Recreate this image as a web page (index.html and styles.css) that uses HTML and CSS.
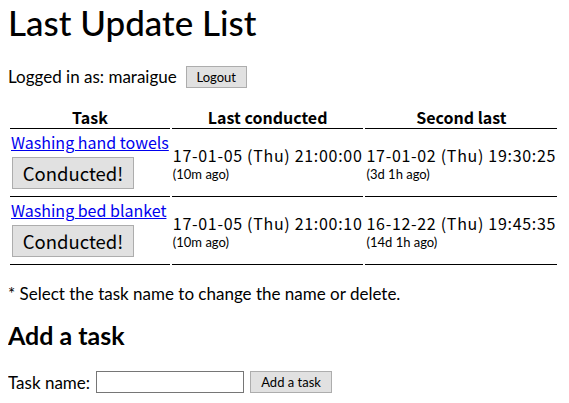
FILE: index.html
```html
<!DOCTYPE html>
<html>
<head>
<meta charset="utf-8">
<link rel="stylesheet" href="styles.css">
</head>
<body>
<h1 class="title">Last Update List</h1>
<div class="login">Logged in as: maraigue <button class="btn logout">Logout</button></div>
<table class="list">
  <thead>
    <tr><th class="c1">Task</th><th class="c2">Last conducted</th><th class="c3">Second last</th></tr>
  </thead>
  <tbody>
    <tr>
      <td class="task"><a href="#">Washing hand towels</a><button class="btn big">Conducted!</button></td>
      <td><div class="date">17-01-05 (Thu) 21:00:00</div><div class="ago">(10m ago)</div></td>
      <td><div class="date">17-01-02 (Thu) 19:30:25</div><div class="ago">(3d 1h ago)</div></td>
    </tr>
    <tr>
      <td class="task"><a href="#">Washing bed blanket</a><button class="btn big">Conducted!</button></td>
      <td><div class="date">17-01-05 (Thu) 21:00:10</div><div class="ago">(10m ago)</div></td>
      <td><div class="date">16-12-22 (Thu) 19:45:35</div><div class="ago">(14d 1h ago)</div></td>
    </tr>
  </tbody>
</table>
<p class="note">* Select the task name to change the name or delete.</p>
<h2 class="sub">Add a task</h2>
<div class="add">Task name: <input class="field" type="text"><button class="btn addbtn">Add a task</button></div>
</body>
</html>
```
FILE: styles.css
```css
body {
  margin: 8px;
  font-family: Lato, "Noto Sans", sans-serif;
  font-size: 17px;
  color: #000;
  background: #fff;
}
.title {
  font-size: 35px;
  font-weight: 500;
  margin: 0;
  line-height: 28px;
}
.login {
  margin-top: 30px;
  line-height: 22px;
  height: 22px;
  display: flex;
  align-items: center;
}
.btn {
  font-family: Lato, sans-serif;
  font-size: 13px;
  background: #e1e1e1;
  border: 1px solid #adadad;
  padding: 0 9px;
  height: 22px;
  color: #000;
  box-sizing: border-box;
}
.logout {
  width: 61px;
  margin-left: 9px;
}
.list {
  margin-top: 16px;
  border-spacing: 2px;
  font-family: "Noto Sans CJK JP", sans-serif;
  table-layout: fixed;
}
.list th {
  font-weight: bold;
  font-size: 16px;
  border-bottom: 1px solid #000;
  line-height: 20px;
  padding: 1px;
}
.c1 { width: 157px; }
.c2 { width: 189px; }
.c3 { width: 190px; }
.list td {
  border-bottom: 1px solid #000;
  padding: 1px;
  vertical-align: middle;
}
.task a {
  display: block;
  color: #0000ee;
  font-size: 16px;
  line-height: 20px;
  white-space: nowrap;
}
.btn.big {
  font-family: "Noto Sans CJK JP", sans-serif;
  font-size: 18.5px;
  height: 32px;
  width: 122px;
  padding: 0;
  margin: 5px 0 6px 1px;
  display: block;
}
.date {
  font-size: 16px;
  line-height: 19px;
  letter-spacing: 0.7px;
  white-space: nowrap;
}
.ago {
  font-family: Lato, sans-serif;
  font-size: 13px;
  line-height: 15px;
  margin-top: 2px;
}
.note {
  margin: 17px 0 0;
  line-height: 20px;
}
.sub {
  font-size: 25px;
  line-height: 30px;
  margin: 16px 0 0;
}
.add {
  margin-top: 21px;
  display: flex;
  align-items: center;
  height: 22px;
}
.field {
  width: 148px;
  height: 22px;
  box-sizing: border-box;
  border: 1px solid #767676;
  padding: 1px 2px;
  margin: 0 0 0 6px;
}
.addbtn {
  width: 82px;
  margin-left: 6px;
}
```
